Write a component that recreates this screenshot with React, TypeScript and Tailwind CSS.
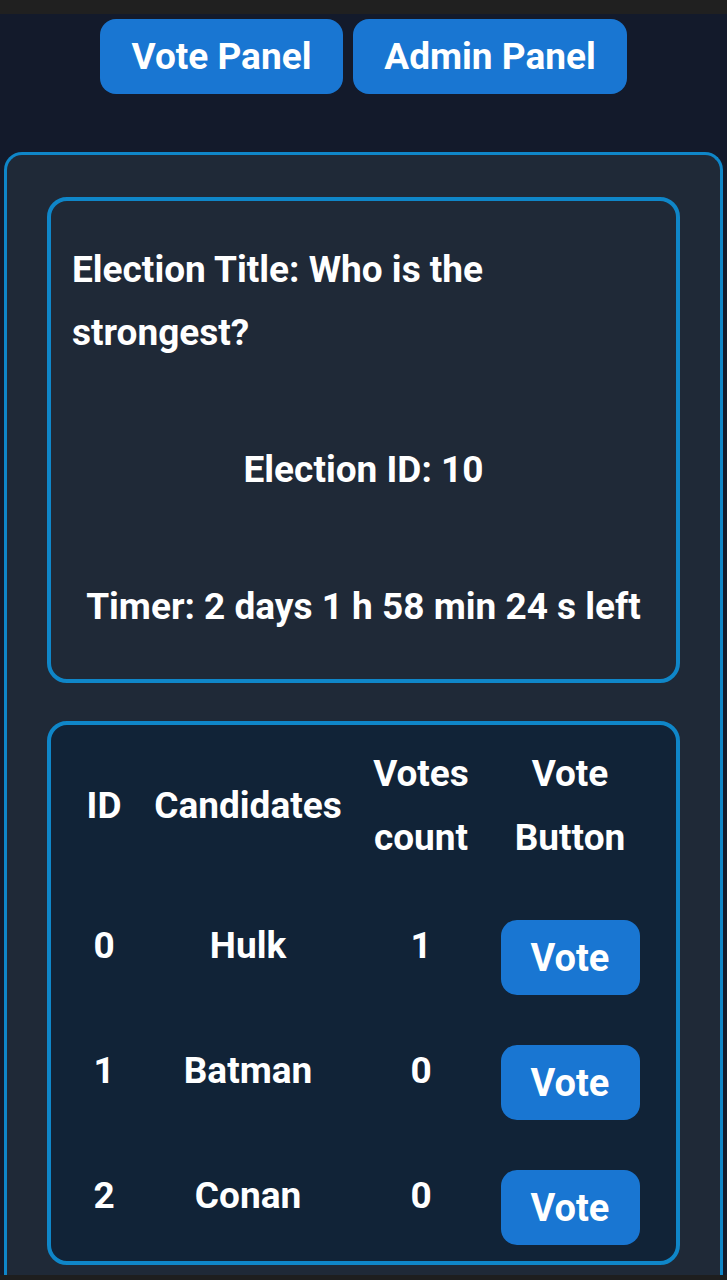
import React from "react";

const rows = [
  { id: 0, name: "Hulk", votes: 1 },
  { id: 1, name: "Batman", votes: 0 },
  { id: 2, name: "Conan", votes: 0 },
];

export default function App() {
  return (
    <div
      className="min-h-[1280px] w-[727px] bg-[#131a2b] text-white flex flex-col"
      style={{ fontFamily: "Roboto, 'Noto Sans', sans-serif" }}
    >
      <div className="h-[14px] bg-[#202020]" />
      <div className="flex justify-center gap-[10px] pt-[5px]">
        <button className="w-[243px] h-[75px] rounded-[16px] bg-[#1976d2] text-[37px] font-bold">
          Vote Panel
        </button>
        <button className="w-[274px] h-[75px] rounded-[16px] bg-[#1976d2] text-[37px] font-bold">
          Admin Panel
        </button>
      </div>
      <div className="mx-[4px] mt-[58px] flex-1 rounded-t-[18px] border-[3px] border-b-0 border-[#0f86c8] bg-[#1f2937] px-[40px] pt-[42px]">
        <div className="rounded-[20px] border-[4px] border-[#0f86c8] bg-[#1f2937] px-[21px] pt-[37px] pb-[41px] text-[37px] font-bold leading-[63px]">
          <div>Election Title: Who is the strongest?</div>
          <div className="mt-[74px] text-center">Election ID: 10</div>
          <div className="mt-[74px] text-center whitespace-nowrap">Timer: 2 days 1 h 58 min 24 s left</div>
        </div>
        <div className="mt-[38px] rounded-[20px] border-[4px] border-[#0f86c8] bg-[#112337] px-[20px] pt-[17px] pb-[16px] text-[37px] font-bold leading-[64px]">
          <div className="grid grid-cols-[66px_222px_124px_174px] items-center text-center">
            <div>ID</div>
            <div>Candidates</div>
            <div>
              Votes
              <br />
              count
            </div>
            <div>
              Vote
              <br />
              Button
            </div>
          </div>
          {rows.map((r) => (
            <div
              key={r.id}
              className="mt-[44px] grid grid-cols-[66px_222px_124px_174px] items-start text-center"
            >
              <div>{r.id}</div>
              <div>{r.name}</div>
              <div>{r.votes}</div>
              <div className="flex justify-center">
                <button className="mt-[6px] w-[139px] h-[75px] rounded-[16px] bg-[#1976d2] text-[38px] font-bold leading-[77px]">
                  Vote
                </button>
              </div>
            </div>
          ))}
        </div>
      </div>
      <div className="h-[5px] bg-[#1e1e1e]" />
    </div>
  );
}
